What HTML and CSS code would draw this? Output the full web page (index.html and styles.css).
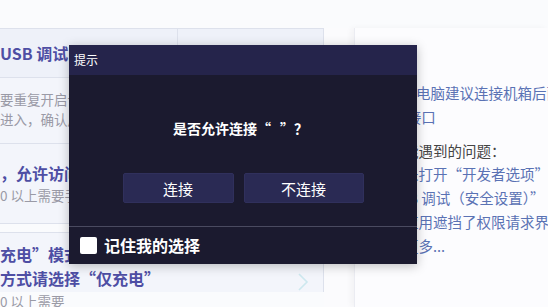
FILE: index.html
```html
<!DOCTYPE html>
<html lang="zh-CN">
<head>
    <meta charset="UTF-8">
    <meta name="viewport" content="width=device-width, initial-scale=1.0">
    <title>提示</title>
    <link rel="stylesheet" href="styles.css">
</head>
<body>

<div class="top-strip"></div>

<div class="main">
    <div class="left">
        <div class="card">
            <div class="card-head">
                <div class="head-cell">USB 调试</div>
                <div class="head-cell"></div>
            </div>
            <div class="row row-first">
                <p class="gray">要重复开启调试模式</p>
                <p class="gray">进入，确认后即可</p>
            </div>
            <div class="row row-second">
                <p class="bold">，允许访问设备数据</p>
                <p class="gray">0 以上需要手动确认</p>
            </div>
        </div>

        <div class="card card-next">
            <div class="item">
                <div class="item-text">
                    <p class="bold">充电”模式连接</p>
                    <p class="bold">方式请选择“仅充电”</p>
                    <p class="gray">0 以上需要</p>
                </div>
                <svg class="chevron" width="12" height="18" viewBox="0 0 12 18">
                    <path d="M2 1 L10 9 L2 17" fill="none" stroke="#cde8ef" stroke-width="1.6"/>
                </svg>
            </div>
        </div>
    </div>

    <div class="spacer"></div>

    <div class="right">
        <p class="tip">1.台式电脑建议连接机箱后面的</p>
        <p class="tip">USB 接口</p>
        <p class="tip dark">您可能遇到的问题：</p>
        <p class="tip">手机未打开“开发者选项”和</p>
        <p class="tip">“USB 调试（安全设置）”</p>
        <p class="tip">悬浮应用遮挡了权限请求界面</p>
        <p class="tip">查看更多...</p>
    </div>
</div>

<div class="dialog">
    <div class="dialog-title">提示</div>
    <div class="dialog-body">
        <p class="dialog-msg">是否允许连接“<span class="name-gap"></span>”？</p>
        <div class="dialog-actions">
            <button class="dlg-btn btn-yes">连接</button>
            <button class="dlg-btn btn-no">不连接</button>
        </div>
    </div>
    <div class="dialog-foot">
        <span class="check"></span>
        <span class="check-label">记住我的选择</span>
    </div>
</div>

</body>
</html>
```

FILE: styles.css
```css
/* Reset */
* {
    margin: 0;
    padding: 0;
    box-sizing: border-box;
}

body {
    font-family: "Noto Sans CJK SC", "Noto Sans", sans-serif;
    background-color: #fafbfd;
    width: 548px;
    height: 307px;
    overflow: hidden;
    position: relative;
}

.top-strip {
    height: 28px;
}

.main {
    display: flex;
    height: 279px;
}

/* Left list of cards */
.left {
    width: 324px;
    flex-shrink: 0;
}

.card {
    background-color: #f3f5fb;
    border-top: 1px solid #dde1ec;
    border-right: 1px solid #dde1ec;
}

.card-head {
    display: flex;
    height: 49px;
    background-color: #eef1f9;
    border-bottom: 1px solid #dde1ec;
}

.head-cell {
    width: 178px;
    font-size: 16px;
    font-weight: 700;
    color: #4e4ea4;
    line-height: 48px;
    white-space: nowrap;
    border-right: 1px solid #dde1ec;
}

.head-cell:last-child {
    flex: 1;
    border-right: none;
}

.row {
    border-bottom: 1px solid #dde1ec;
    white-space: nowrap;
}

.row-first {
    height: 66px;
    padding-top: 11px;
}

.row-second {
    height: 80px;
    padding-top: 17px;
}

.gray {
    font-size: 13.5px;
    line-height: 20px;
    color: #9a9aa6;
}

.bold {
    font-size: 16px;
    font-weight: 700;
    line-height: 24px;
    color: #4e4ea4;
}

.card-next {
    margin-top: 8px;
    height: 60px;
}

.item {
    display: flex;
    align-items: flex-start;
    padding-top: 9px;
    padding-right: 14px;
}

.item-text {
    flex: 1;
    white-space: nowrap;
}

.item-text .gray {
    margin-top: 1px;
}

.chevron {
    margin-top: 31px;
}

/* Spacer column */
.spacer {
    width: 30px;
    flex-shrink: 0;
    background-color: #fbfbfd;
}

/* Right help panel */
.right {
    flex: 1;
    background-color: #fcfcfe;
    border-left: 1px solid #ebecf2;
    box-shadow: -3px 0 6px rgba(0, 0, 0, 0.04);
    padding-top: 53px;
    padding-left: 20px;
    overflow: hidden;
}

.tip {
    font-size: 14.5px;
    line-height: 24px;
    color: #5a72b4;
    white-space: nowrap;
}

.tip.dark {
    color: #444;
    margin-top: 11px;
    line-height: 22px;
}

/* Permission dialog (sits over the page) */
.dialog {
    position: absolute;
    left: 69px;
    top: 45px;
    width: 348px;
    height: 219px;
    background-color: #1b1a2f;
    box-shadow: 0 2px 10px rgba(0, 0, 0, 0.25);
}

.dialog-title {
    height: 30px;
    background-color: #25244b;
    color: #fff;
    font-size: 12px;
    line-height: 30px;
    padding-left: 5px;
}

.dialog-body {
    height: 152px;
    border-bottom: 1px solid #4a4a60;
}

.dialog-msg {
    text-align: center;
    color: #fff;
    font-size: 14px;
    font-weight: 700;
    padding-top: 43px;
    padding-right: 5px;
    line-height: 20px;
}

.name-gap {
    display: inline-block;
    width: 9px;
}

.dialog-actions {
    display: flex;
    justify-content: center;
    gap: 10px;
    margin-top: 35px;
}

.dlg-btn {
    height: 30px;
    background-color: #2a2a54;
    border: 1px solid #30305c;
    border-radius: 2px;
    color: #fff;
    font-family: inherit;
    font-size: 15px;
}

.btn-yes {
    width: 111px;
}

.btn-no {
    width: 120px;
}

.dialog-foot {
    display: flex;
    align-items: center;
    height: 36px;
    padding-left: 11px;
}

.check {
    width: 17px;
    height: 17px;
    background-color: #fff;
    border-radius: 2px;
}

.check-label {
    margin-left: 7px;
    color: #fff;
    font-size: 16px;
    font-weight: 700;
}
```
